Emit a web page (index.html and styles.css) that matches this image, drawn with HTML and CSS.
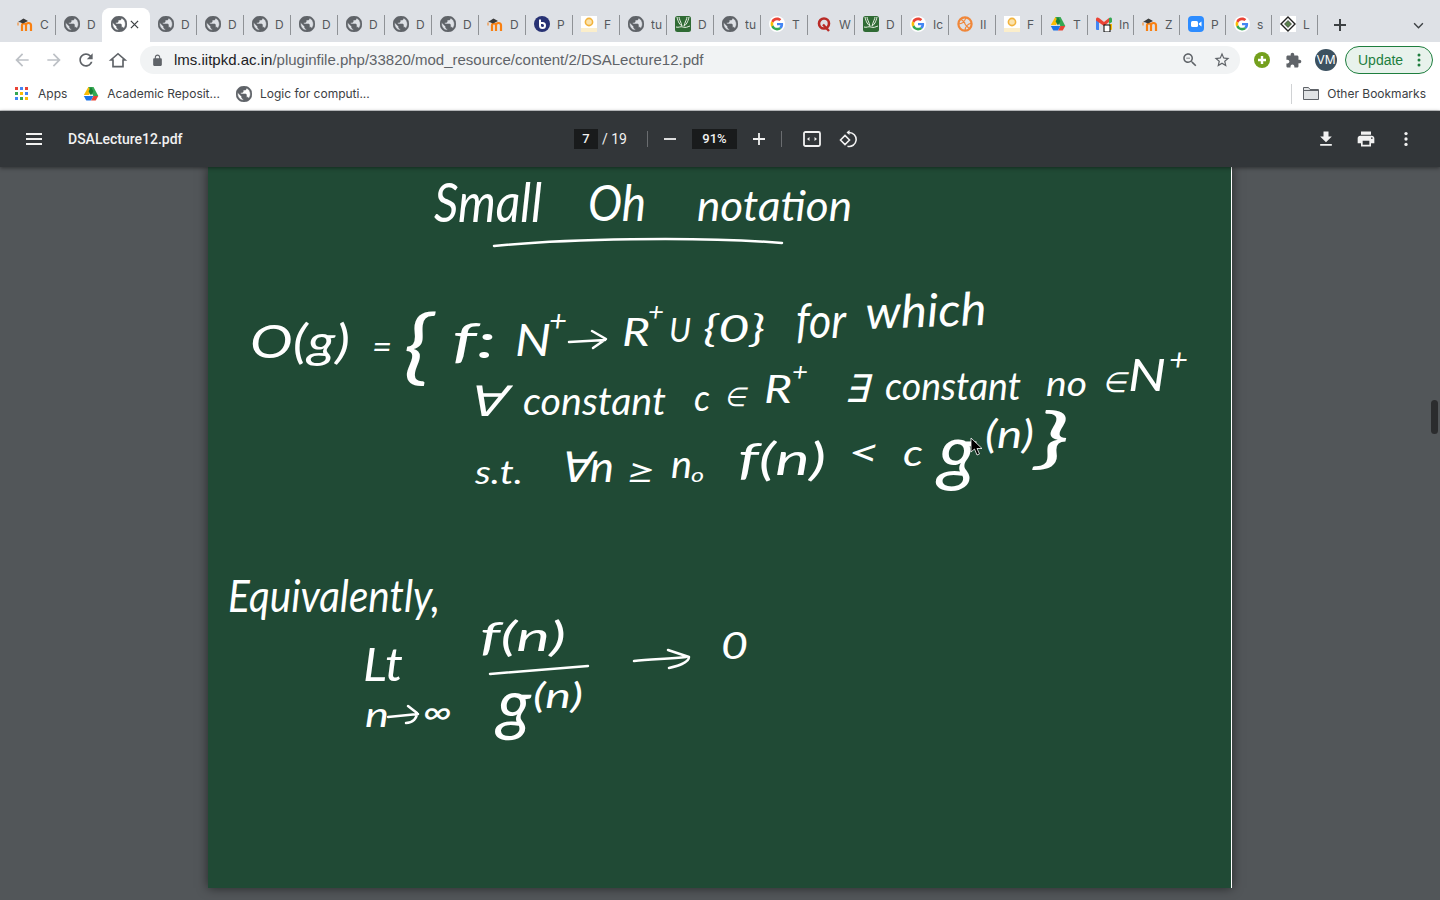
FILE: index.html
```html
<!DOCTYPE html>
<html lang="en">
<head>
    <meta charset="UTF-8">
    <meta name="viewport" content="width=device-width, initial-scale=1.0">
    <title>DSALecture12.pdf</title>
    <link rel="stylesheet" href="styles.css">
</head>
<body>
    <!-- favicons, reused by the tab strip and the bookmarks -->
    <svg class="defs" width="0" height="0">
        <symbol id="globe" viewBox="2 2 20 20"><path fill="#5f6368" stroke="#5f6368" stroke-width=".7" d="M12 2C6.48 2 2 6.48 2 12s4.48 10 10 10 10-4.48 10-10S17.52 2 12 2zm-1 17.93c-3.95-.49-7-3.85-7-7.93 0-.62.08-1.21.21-1.79L9 15v1c0 1.1.9 2 2 2v1.93zm6.9-2.54c-.26-.81-1-1.39-1.9-1.39h-1v-3c0-.55-.45-1-1-1H8v-2h2c.55 0 1-.45 1-1V7h2c1.1 0 2-.9 2-2v-.41c2.93 1.19 5 4.06 5 7.41 0 2.08-.8 3.97-2.1 5.39z"/></symbol>
        <symbol id="moodle" viewBox="0 0 16 16">
            <path fill="none" stroke="#f98012" stroke-width="2.2" d="M5 15V9.5a2 2 0 0 1 4 0V15M9 9.5a2.4 2.4 0 0 1 5 0V15"/>
            <path fill="#3a3a3a" d="M1 6l5.5-3.5L11 5 6 7.5 3 6.2z"/>
            <path fill="none" stroke="#f98012" stroke-width="1" d="M1 6.5v3"/>
        </symbol>
        <symbol id="bbb" viewBox="0 0 16 16">
            <circle cx="8" cy="8" r="8" fill="#283274"/>
            <path fill="none" stroke="#fff" stroke-width="2" d="M6 3.5V9.5a2.5 2.5 0 1 0 2.5-2.5H6"/>
        </symbol>
        <symbol id="yellow" viewBox="0 0 16 16">
            <rect width="16" height="16" fill="#fff"/>
            <circle cx="8" cy="6" r="3.6" fill="#fbe3ad" stroke="#f2b33d" stroke-width="1.6"/>
            <rect x="0" y="12" width="16" height="4" fill="#fbeecb"/>
        </symbol>
        <symbol id="wolfram" viewBox="0 0 16 16">
            <rect width="16" height="16" rx="2.5" fill="#2f6b34"/>
            <path fill="none" stroke="#e8f0e4" stroke-width="1" d="M2 1c1 5 3 8 5 9-1-4-3-7-3-9M14 1c-1 5-3 8-5 9 1-4 3-7 3-9M1 11c3 1 4-1 7 0s4 0 7-1"/>
        </symbol>
        <symbol id="gmark" viewBox="-6 -6 60 60">
            <circle cx="24" cy="24" r="30" fill="#fff"/>
            <path fill="#EA4335" d="M24 9.5c3.54 0 6.71 1.22 9.21 3.6l6.85-6.85C35.9 2.38 30.47 0 24 0 14.62 0 6.51 5.38 2.56 13.22l7.98 6.19C12.43 13.72 17.74 9.5 24 9.5z"/>
            <path fill="#4285F4" d="M46.98 24.55c0-1.57-.15-3.09-.38-4.55H24v9.02h12.94c-.58 2.96-2.26 5.48-4.78 7.18l7.73 6c4.51-4.18 7.09-10.36 7.09-17.65z"/>
            <path fill="#FBBC05" d="M10.53 28.59c-.5-1.45-.78-2.99-.78-4.59s.27-3.14.78-4.59l-7.98-6.19C.92 16.46 0 20.12 0 24c0 3.88.92 7.54 2.56 10.78l7.97-6.19z"/>
            <path fill="#34A853" d="M24 48c6.48 0 11.93-2.13 15.89-5.81l-7.73-6c-2.15 1.45-4.92 2.3-8.16 2.3-6.26 0-11.57-4.22-13.47-9.91l-7.98 6.19C6.51 42.62 14.62 48 24 48z"/>
        </symbol>
        <symbol id="quora" viewBox="0 0 16 16">
            <circle cx="8" cy="7.5" r="5" fill="none" stroke="#b92b27" stroke-width="2.6"/>
            <path stroke="#b92b27" stroke-width="2.4" d="M7 8.5l6 6.5"/>
        </symbol>
        <symbol id="spiral" viewBox="0 0 16 16">
            <circle cx="8" cy="8" r="6.6" fill="none" stroke="#f0873a" stroke-width="2.2"/>
            <path fill="none" stroke="#f0873a" stroke-width="1.2" d="M1 8c4 0 7-2 8-7M8 15c0-4 2-7 7-8M3 3c3 1 5 4 5 5s3 3 5 5"/>
        </symbol>
        <symbol id="drive" viewBox="0 0 16 16">
            <path fill="#fbbc04" d="M5.3 1h5.2L6 9H.8z"/>
            <path fill="#34a853" d="M10.5 1l4.8 9h-5L5.4 1z"/>
            <path fill="#ea4335" d="M15.3 10l-2.6 4.600H8L10.400 10z"/>
            <path fill="#1a73e8" d="M.8 10h9.600l-2.500 4.600H3.300z"/>
            <path fill="#188038" d="M5.600 5.200L8 1l2.400 4.200L8 9.400z"/>
        </symbol>
        <symbol id="gmail" viewBox="0 0 16 16">
            <path fill="#4285f4" d="M0 3h3v11H1a1 1 0 0 1-1-1z"/>
            <path fill="#ea4335" d="M0 3.200C0 1.500 1.700 1 3 2l5 4 5-4v4L8 10 0 4.500z"/>
            <path fill="#34a853" d="M13 2c1.300-1 3-.5 3 1.200V6l-3 2z"/>
            <path fill="#fbbc04" d="M13 8h3v5a1 1 0 0 1-1 1h-2z"/>
            <rect x="8" y="9" width="6" height="7" fill="#fff" stroke="#000" stroke-width="1"/>
        </symbol>
        <symbol id="zoom" viewBox="0 0 16 16">
            <rect width="16" height="16" rx="4" fill="#2d8cff"/>
            <rect x="3" y="5" width="7" height="6" rx="1.500" fill="#fff"/>
            <path fill="#fff" d="M10.800 7.500l2.700-2v5l-2.700-2z"/>
        </symbol>
        <symbol id="diamond" viewBox="0 0 16 16">
            <rect width="16" height="16" fill="#fff"/>
            <path fill="none" stroke="#222" stroke-width="1.400" d="M8 1l7 7-7 7-7-7z"/>
            <path fill="#5a7f4d" stroke="#222" stroke-width=".6" d="M8 4.500L11.500 8 8 11.500 4.500 8z"/>
        </symbol>
    </svg>

    <div class="tabstrip">
        <div class="tab"><svg class="fav"><use href="#moodle"/></svg><span class="tab-label">C</span></div>
        <div class="tab tab-nosep"><svg class="fav"><use href="#globe"/></svg><span class="tab-label">D</span></div>
        <div class="tab tab-active"><svg class="fav"><use href="#globe"/></svg>
            <svg class="tab-close" viewBox="0 0 10 10"><path d="M1 1l8 8M9 1l-8 8"/></svg></div>
        <div class="tab"><svg class="fav"><use href="#globe"/></svg><span class="tab-label">D</span></div>
        <div class="tab"><svg class="fav"><use href="#globe"/></svg><span class="tab-label">D</span></div>
        <div class="tab"><svg class="fav"><use href="#globe"/></svg><span class="tab-label">D</span></div>
        <div class="tab"><svg class="fav"><use href="#globe"/></svg><span class="tab-label">D</span></div>
        <div class="tab"><svg class="fav"><use href="#globe"/></svg><span class="tab-label">D</span></div>
        <div class="tab"><svg class="fav"><use href="#globe"/></svg><span class="tab-label">D</span></div>
        <div class="tab"><svg class="fav"><use href="#globe"/></svg><span class="tab-label">D</span></div>
        <div class="tab"><svg class="fav"><use href="#moodle"/></svg><span class="tab-label">D</span></div>
        <div class="tab"><svg class="fav"><use href="#bbb"/></svg><span class="tab-label">P</span></div>
        <div class="tab"><svg class="fav"><use href="#yellow"/></svg><span class="tab-label">F</span></div>
        <div class="tab"><svg class="fav"><use href="#globe"/></svg><span class="tab-label">tu</span></div>
        <div class="tab"><svg class="fav"><use href="#wolfram"/></svg><span class="tab-label">D</span></div>
        <div class="tab"><svg class="fav"><use href="#globe"/></svg><span class="tab-label">tu</span></div>
        <div class="tab"><svg class="fav"><use href="#gmark"/></svg><span class="tab-label">T</span></div>
        <div class="tab"><svg class="fav"><use href="#quora"/></svg><span class="tab-label">W</span></div>
        <div class="tab"><svg class="fav"><use href="#wolfram"/></svg><span class="tab-label">D</span></div>
        <div class="tab"><svg class="fav"><use href="#gmark"/></svg><span class="tab-label">Ic</span></div>
        <div class="tab"><svg class="fav"><use href="#spiral"/></svg><span class="tab-label">II</span></div>
        <div class="tab tab-narrow"><svg class="fav"><use href="#yellow"/></svg><span class="tab-label">F</span></div>
        <div class="tab tab-narrow"><svg class="fav"><use href="#drive"/></svg><span class="tab-label">T</span></div>
        <div class="tab tab-narrow"><svg class="fav"><use href="#gmail"/></svg><span class="tab-label">In</span></div>
        <div class="tab tab-narrow"><svg class="fav"><use href="#moodle"/></svg><span class="tab-label">Z</span></div>
        <div class="tab tab-narrow"><svg class="fav"><use href="#zoom"/></svg><span class="tab-label">P</span></div>
        <div class="tab tab-narrow"><svg class="fav"><use href="#gmark"/></svg><span class="tab-label">s</span></div>
        <div class="tab tab-narrow"><svg class="fav"><use href="#diamond"/></svg><span class="tab-label">L</span></div>
        <svg class="new-tab" viewBox="0 0 12 12"><path d="M6 0v12M0 6h12"/></svg>
        <svg class="tab-search" viewBox="0 0 12 8"><path d="M1 1.500l5 5 5-5"/></svg>
    </div>

    <div class="toolbar">
        <svg class="tool tool-off" viewBox="0 0 24 24"><path d="M20 11H7.830l5.590-5.590L12 4l-8 8 8 8 1.410-1.410L7.830 13H20v-2z"/></svg>
        <svg class="tool tool-off" viewBox="0 0 24 24"><path d="M12 4l-1.410 1.410L16.170 11H4v2h12.170l-5.580 5.590L12 20l8-8z"/></svg>
        <svg class="tool" viewBox="0 0 24 24"><path d="M17.650 6.350C16.200 4.900 14.210 4 12 4c-4.420 0-7.990 3.580-7.990 8s3.570 8 7.990 8c3.730 0 6.840-2.550 7.730-6h-2.080c-.82 2.330-3.040 4-5.650 4-3.310 0-6-2.690-6-6s2.690-6 6-6c1.660 0 3.140.69 4.220 1.780L13 11h7V4l-2.350 2.350z"/></svg>
        <svg class="tool tool-home" viewBox="0 0 24 24"><path d="M12 4.500L3.500 12H6v8h12v-8h2.500z"/></svg>
        <div class="omnibox">
            <svg class="lock" viewBox="0 0 24 24"><path d="M18 8h-1V6c0-2.760-2.240-5-5-5S7 3.240 7 6v2H6c-1.100 0-2 .9-2 2v10c0 1.100.9 2 2 2h12c1.100 0 2-.9 2-2V10c0-1.100-.9-2-2-2zM9 6c0-1.660 1.340-3 3-3s3 1.340 3 3v2H9V6z"/></svg>
            <div class="url"><span class="url-host">lms.iitpkd.ac.in</span>/pluginfile.php/33820/mod_resource/content/2/DSALecture12.pdf</div>
            <svg class="omni-icon" viewBox="0 0 24 24"><path d="M15.500 14h-.79l-.28-.27C15.410 12.590 16 11.110 16 9.500 16 5.910 13.090 3 9.500 3S3 5.910 3 9.500 5.910 16 9.500 16c1.610 0 3.090-.59 4.230-1.570l.27.28v.79l5 4.990L20.490 19l-4.990-5zm-6 0C7.010 14 5 11.990 5 9.500S7.010 5 9.500 5 14 7.010 14 9.500 11.990 14 9.500 14zM7 9h5v1H7z"/></svg>
            <svg class="omni-icon" viewBox="0 0 24 24"><path d="M22 9.240l-7.190-.62L12 2 9.190 8.630 2 9.240l5.460 4.730L5.820 21 12 17.270 18.180 21l-1.630-7.030L22 9.240zM12 15.400l-3.760 2.270 1-4.280-3.320-2.880 4.380-.38L12 6.100l1.710 4.040 4.380.38-3.320 2.880 1 4.280L12 15.400z"/></svg>
        </div>
        <svg class="ext-plus" viewBox="0 0 16 16"><circle cx="8" cy="8" r="8" fill="#74a01e"/><path d="M8 4v8M4 8h8" stroke="#fff" stroke-width="2.400"/></svg>
        <svg class="ext-puzzle" viewBox="0 0 24 24"><path d="M20.500 11H19V7c0-1.100-.9-2-2-2h-4V3.500C13 2.120 11.880 1 10.500 1S8 2.120 8 3.500V5H4c-1.100 0-1.990.9-1.990 2v3.800H3.500c1.490 0 2.700 1.210 2.700 2.700s-1.210 2.700-2.700 2.700H2V20c0 1.100.9 2 2 2h3.800v-1.500c0-1.490 1.210-2.700 2.700-2.700 1.490 0 2.700 1.210 2.700 2.700V22H17c1.100 0 2-.9 2-2v-4h1.500c1.380 0 2.500-1.120 2.500-2.500S21.880 11 20.500 11z"/></svg>
        <div class="avatar">VM</div>
        <div class="update">
            <span>Update</span>
            <svg class="update-dots" viewBox="0 0 4 14"><circle cx="2" cy="2" r="1.500"/><circle cx="2" cy="7" r="1.500"/><circle cx="2" cy="12" r="1.500"/></svg>
        </div>
    </div>

    <div class="bookmarks">
        <div class="bookmark">
            <svg class="apps" viewBox="0 0 13 13">
                <rect x="0" y="0" width="3" height="3" fill="#ea4335"/><rect x="5" y="0" width="3" height="3" fill="#4285f4"/><rect x="10" y="0" width="3" height="3" fill="#ea4335"/>
                <rect x="0" y="5" width="3" height="3" fill="#34a853"/><rect x="5" y="5" width="3" height="3" fill="#fbbc04"/><rect x="10" y="5" width="3" height="3" fill="#4285f4"/>
                <rect x="0" y="10" width="3" height="3" fill="#4285f4"/><rect x="5" y="10" width="3" height="3" fill="#34a853"/><rect x="10" y="10" width="3" height="3" fill="#fbbc04"/>
            </svg>
            <span>Apps</span>
        </div>
        <div class="bookmark">
            <svg class="fav"><use href="#drive"/></svg>
            <span>Academic Reposit...</span>
        </div>
        <div class="bookmark">
            <svg class="fav"><use href="#globe"/></svg>
            <span>Logic for computi...</span>
        </div>
        <div class="other-bookmarks">
            <svg class="folder" viewBox="0 0 16 13"><path d="M.5 12.500V.5h5l1.500 2h8.500v10z"/><path d="M.5 3.500h15"/></svg>
            <span>Other Bookmarks</span>
        </div>
    </div>

    <div class="pdf-toolbar">
        <div class="pdf-left">
            <svg class="hamburger" viewBox="0 0 16 12"><path d="M0 1h16M0 6h16M0 11h16"/></svg>
            <span class="pdf-title">DSALecture12.pdf</span>
        </div>
        <div class="pdf-center">
            <span class="pdf-box pdf-box-page">7</span>
            <span class="pdf-count">/ 19</span>
            <span class="pdf-sep"></span>
            <svg class="pdf-zoom-btn" viewBox="0 0 12 12"><path d="M0 6h12"/></svg>
            <span class="pdf-box pdf-box-zoom">91%</span>
            <svg class="pdf-zoom-btn" viewBox="0 0 12 12"><path d="M0 6h12M6 0v12"/></svg>
            <span class="pdf-sep pdf-sep-second"></span>
            <svg class="pdf-fit" viewBox="0 0 18 16"><rect x="1" y="1" width="16" height="14" rx="1.500" fill="none" stroke="#f1f1f1" stroke-width="1.800"/><path fill="#f1f1f1" d="M4 8l2.500-2v4zM14 8l-2.500-2v4z"/></svg>
            <svg class="pdf-rotate" viewBox="0 0 18 18"><path fill="none" stroke="#f1f1f1" stroke-width="1.600" d="M1.500 10l4.500-4.500L10.500 10 6 14.500zM8.500 2.500h1.500a7 7 0 1 1-1.500 13.800"/><path fill="#f1f1f1" d="M7.500 2.500L10.500 0v5z"/></svg>
        </div>
        <div class="pdf-right">
            <svg class="pdf-action" viewBox="0 0 24 24"><path d="M19 9h-4V3H9v6H5l7 7 7-7zM5 18v2h14v-2H5z"/></svg>
            <svg class="pdf-action" viewBox="0 0 24 24"><path d="M19 8H5c-1.660 0-3 1.340-3 3v6h4v4h12v-4h4v-6c0-1.660-1.340-3-3-3zm-3 11H8v-5h8v5zm3-7c-.55 0-1-.45-1-1s.45-1 1-1 1 .45 1 1-.45 1-1 1zm-1-9H6v4h12V3z"/></svg>
            <svg class="pdf-action" viewBox="0 0 24 24"><circle cx="12" cy="5.500" r="2"/><circle cx="12" cy="12" r="2"/><circle cx="12" cy="18.500" r="2"/></svg>
        </div>
    </div>

    <div class="viewer">
        <div class="page">
            <!-- viewBox uses window coordinates so the notes are easy to place -->
            <svg class="notes" viewBox="208 167 1023 721">
                <text x="434" y="222" font-size="54" textLength="108" lengthAdjust="spacingAndGlyphs">Small</text>
                <text x="588" y="221" font-size="50" textLength="58" lengthAdjust="spacingAndGlyphs">Oh</text>
                <text x="697" y="221" font-size="42" textLength="155" lengthAdjust="spacingAndGlyphs">notation</text>
                <path class="stroke" d="M494 246c70-7 200-10 288-3"/>

                <text x="250" y="358" font-size="46" textLength="100" lengthAdjust="spacingAndGlyphs">O(g)</text>
                <text x="372" y="359" font-size="34" textLength="20" lengthAdjust="spacingAndGlyphs">=</text>
                <text x="403" y="374" font-size="82" textLength="30" lengthAdjust="spacingAndGlyphs">{</text>
                <text x="452" y="358" font-size="48" textLength="44" lengthAdjust="spacingAndGlyphs">f:</text>
                <text x="515" y="356" font-size="44" textLength="36" lengthAdjust="spacingAndGlyphs">N</text>
                <text x="549" y="331" font-size="28" textLength="18" lengthAdjust="spacingAndGlyphs">+</text>
                <path class="stroke" d="M569 342l36-2M592 331l14 8-13 9"/>
                <text x="622" y="346" font-size="38" textLength="28" lengthAdjust="spacingAndGlyphs">R</text>
                <text x="648" y="321" font-size="26" textLength="16" lengthAdjust="spacingAndGlyphs">+</text>
                <text x="669" y="342" font-size="32" textLength="22" lengthAdjust="spacingAndGlyphs">U</text>
                <text x="703" y="342" font-size="36" textLength="62" lengthAdjust="spacingAndGlyphs">{0}</text>
                <text x="796" y="338" font-size="48" textLength="50" lengthAdjust="spacingAndGlyphs">for</text>
                <text x="866" y="329" font-size="46" textLength="121" lengthAdjust="spacingAndGlyphs" transform="rotate(-2 866 329)">which</text>

                <text x="466" y="416" font-size="42" textLength="38" lengthAdjust="spacingAndGlyphs">∀</text>
                <text x="523" y="415" font-size="38" textLength="143" lengthAdjust="spacingAndGlyphs">constant</text>
                <text x="694" y="411" font-size="36" textLength="16" lengthAdjust="spacingAndGlyphs">c</text>
                <text x="724" y="406" font-size="26" textLength="22" lengthAdjust="spacingAndGlyphs">∈</text>
                <text x="764" y="403" font-size="38" textLength="28" lengthAdjust="spacingAndGlyphs">R</text>
                <text x="792" y="381" font-size="26" textLength="16" lengthAdjust="spacingAndGlyphs">+</text>
                <text x="844" y="402" font-size="38" textLength="24" lengthAdjust="spacingAndGlyphs">∃</text>
                <text x="885" y="400" font-size="38" textLength="136" lengthAdjust="spacingAndGlyphs">constant</text>
                <text x="1046" y="396" font-size="34" textLength="41" lengthAdjust="spacingAndGlyphs">no</text>
                <text x="1102" y="392" font-size="28" textLength="24" lengthAdjust="spacingAndGlyphs">∈</text>
                <text x="1128" y="391" font-size="44" textLength="38" lengthAdjust="spacingAndGlyphs">N</text>
                <text x="1169" y="370" font-size="30" textLength="19" lengthAdjust="spacingAndGlyphs">+</text>

                <text x="475" y="484" font-size="32" textLength="48" lengthAdjust="spacingAndGlyphs">s.t.</text>
                <text x="558" y="482" font-size="42" textLength="56" lengthAdjust="spacingAndGlyphs">∀n</text>
                <text x="626" y="483" font-size="34" textLength="30" lengthAdjust="spacingAndGlyphs">≥</text>
                <text x="671" y="478" font-size="38" textLength="21" lengthAdjust="spacingAndGlyphs">n</text>
                <text x="691" y="482" font-size="20" textLength="13" lengthAdjust="spacingAndGlyphs">o</text>
                <text x="738" y="475" font-size="44" textLength="88" lengthAdjust="spacingAndGlyphs">f(n)</text>
                <text x="848" y="466" font-size="38" textLength="32" lengthAdjust="spacingAndGlyphs">&lt;</text>
                <text x="903" y="466" font-size="36" textLength="20" lengthAdjust="spacingAndGlyphs">c</text>
                <text x="938" y="477" font-size="74" textLength="38" lengthAdjust="spacingAndGlyphs">g</text>
                <text x="985" y="448" font-size="38" textLength="49" lengthAdjust="spacingAndGlyphs">(n)</text>
                <text x="1035" y="461" font-size="66" textLength="35" lengthAdjust="spacingAndGlyphs">}</text>

                <text x="228" y="612" font-size="44" textLength="212" lengthAdjust="spacingAndGlyphs">Equivalently,</text>
                <text x="363" y="681" font-size="46" textLength="40" lengthAdjust="spacingAndGlyphs">Lt</text>
                <text x="480" y="651" font-size="40" textLength="86" lengthAdjust="spacingAndGlyphs">f(n)</text>
                <path class="stroke" d="M490 674l98-8"/>
                <path class="stroke" d="M634 661c16-2 36-2 52-4M668 650l21 7c0 6-12 9-20 11"/>
                <text x="721" y="659" font-size="36" textLength="27" lengthAdjust="spacingAndGlyphs">0</text>
                <text x="365" y="727" font-size="34" textLength="24" lengthAdjust="spacingAndGlyphs">n</text>
                <path class="stroke" d="M388 717l30-3M408 706l9 7c0 5-4 10-11 10"/>
                <text x="423" y="724" font-size="34" textLength="29" lengthAdjust="spacingAndGlyphs">∞</text>
                <text x="497" y="728" font-size="68" textLength="34" lengthAdjust="spacingAndGlyphs">g</text>
                <text x="533" y="708" font-size="34" textLength="50" lengthAdjust="spacingAndGlyphs">(n)</text>

                <path class="cursor" d="M971 438v14l3.500-3 2.500 6 2.500-1-2.500-5.500h5z"/>
            </svg>
        </div>
        <div class="scroll-thumb"></div>
    </div>
</body>
</html>
```

FILE: styles.css
```css
* {
    box-sizing: border-box;
}
html, body {
    margin: 0;
    padding: 0;
    height: 100%;
    overflow: hidden;
}
body {
    width: 1440px;
    height: 900px;
    display: flex;
    flex-direction: column;
    font-family: Inter, "Liberation Sans", sans-serif;
    background-color: #525659;
}
.defs {
    position: absolute;
}

/* tab strip */
.tabstrip {
    height: 42px;
    flex: none;
    display: flex;
    padding: 8px 0 0 9px;
    background-color: #dee1e6;
}
.tab {
    position: relative;
    width: 47px;
    height: 34px;
    flex: none;
    display: flex;
    align-items: center;
    padding: 0 0 2px 8px;
}
.tab::after {
    content: "";
    position: absolute;
    right: 0;
    top: 7px;
    height: 20px;
    width: 1px;
    background-color: #8f9296;
}
.tab-narrow {
    width: 46px;
}
.tab-nosep::after {
    display: none;
}
.tab-active {
    background-color: #ffffff;
    border-radius: 8px 8px 0 0;
    box-shadow: -1px 0 0 #ffffff;
}
.tab-active::after {
    display: none;
}
.fav {
    width: 16px;
    height: 16px;
    flex: none;
}
.tab-label {
    width: 13px;
    margin-left: 7px;
    overflow: hidden;
    white-space: nowrap;
    font-size: 12px;
    color: #55585c;
}
.tab-close {
    width: 9px;
    height: 9px;
    margin-left: 3px;
}
.tab-close path {
    fill: none;
    stroke: #3c4043;
    stroke-width: 1.4;
}
.new-tab {
    width: 12px;
    height: 12px;
    margin: 11px 0 0 16px;
}
.new-tab path {
    fill: none;
    stroke: #3c4043;
    stroke-width: 2;
}
.tab-search {
    width: 11px;
    height: 7px;
    margin: 14px 0 0 67px;
}
.tab-search path {
    fill: none;
    stroke: #3c4043;
    stroke-width: 1.6;
}

/* address bar */
.toolbar {
    height: 36px;
    flex: none;
    display: flex;
    align-items: center;
    padding-left: 12px;
    background-color: #ffffff;
}
.tool {
    width: 20px;
    height: 20px;
    flex: none;
    margin-right: 12px;
    fill: #5f6368;
}
.tool-off {
    fill: #bdc1c6;
}
.tool-home {
    fill: none;
    stroke: #5f6368;
    stroke-width: 2;
}
.omnibox {
    width: 1100px;
    height: 28px;
    display: flex;
    align-items: center;
    padding-left: 11px;
    border-radius: 14px;
    background-color: #f1f3f4;
}
.lock {
    width: 13px;
    height: 13px;
    flex: none;
    fill: #5f6368;
}
.url {
    flex: 1;
    margin: 0 0 2px 10px;
    font-family: "Liberation Sans", sans-serif;
    font-size: 15px;
    color: #5f6368;
}
.url-host {
    color: #202124;
}
.omni-icon {
    width: 18px;
    height: 18px;
    margin-right: 9px;
    fill: #5f6368;
}
.omni-icon + .omni-icon {
    margin: 0 9px 0 5px;
}
.ext-plus {
    width: 16px;
    height: 16px;
    margin-left: 14px;
}
.ext-puzzle {
    width: 17px;
    height: 17px;
    margin-left: 15px;
    fill: #5f6368;
}
.avatar {
    width: 22px;
    height: 22px;
    margin-left: 13px;
    border-radius: 50%;
    background-color: #3c5160;
    color: #ffffff;
    font-size: 12px;
    line-height: 22px;
    text-align: center;
}
.update {
    width: 88px;
    height: 28px;
    margin-left: 8px;
    display: flex;
    align-items: center;
    justify-content: space-between;
    padding: 0 11px 0 12px;
    border: 1px solid #1e7e3e;
    border-radius: 14px;
    background-color: #e8f2ec;
    color: #1e7e3e;
    font-family: "Liberation Sans", sans-serif;
    font-size: 14px;
}
.update-dots {
    width: 4px;
    height: 14px;
    fill: #1e7e3e;
}

/* bookmarks bar */
.bookmarks {
    height: 33px;
    flex: none;
    display: flex;
    align-items: center;
    padding: 0 0 1px 15px;
    background-color: #ffffff;
    border-bottom: 1px solid #c8cacc;
    font-size: 12px;
    color: #3c4043;
}
.bookmark {
    display: flex;
    align-items: center;
    gap: 8px;
    margin-right: 16px;
}
.apps {
    width: 13px;
    height: 13px;
    margin-right: 2px;
}
.other-bookmarks {
    display: flex;
    align-items: center;
    gap: 8px;
    margin-left: auto;
    height: 20px;
    padding: 0 14px 0 11px;
    border-left: 1px solid #d0d2d4;
}
.folder {
    width: 16px;
    height: 13px;
}
.folder path {
    fill: #e1e3e5;
    stroke: #5f6368;
    stroke-width: 1;
}

/* pdf viewer toolbar */
.pdf-toolbar {
    position: relative;
    z-index: 2;
    height: 56px;
    flex: none;
    display: flex;
    align-items: center;
    background-color: #323639;
    box-shadow: 0 1px 4px rgba(0, 0, 0, 0.45);
    color: #f1f1f1;
    font-family: Roboto, sans-serif;
    font-size: 14px;
}
.pdf-left {
    display: flex;
    align-items: center;
    width: 574px;
    flex: none;
    padding-left: 26px;
}
.hamburger {
    width: 16px;
    height: 12px;
    margin-right: 26px;
}
.hamburger path {
    fill: none;
    stroke: #f1f1f1;
    stroke-width: 2;
}
.pdf-title {
    font-weight: 500;
    color: #f1f1f1;
}
.pdf-center {
    display: flex;
    align-items: center;
}
.pdf-box {
    height: 20px;
    line-height: 20px;
    text-align: center;
    background-color: #191b1c;
    font-size: 13px;
    font-weight: 500;
}
.pdf-box-page {
    width: 24px;
}
.pdf-box-zoom {
    width: 45px;
    margin: 0 16px;
}
.pdf-count {
    margin-left: 4px;
    font-size: 14px;
}
.pdf-sep {
    width: 1px;
    height: 16px;
    margin: 0 16px 0 20px;
    background-color: #6a6d70;
}
.pdf-sep-second {
    margin: 0 21px 0 16px;
}
.pdf-zoom-btn {
    width: 12px;
    height: 12px;
}
.pdf-zoom-btn path {
    fill: none;
    stroke: #f1f1f1;
    stroke-width: 1.800;
}
.pdf-fit {
    width: 18px;
    height: 16px;
    margin-right: 18px;
}
.pdf-rotate {
    width: 18px;
    height: 18px;
}
.pdf-right {
    display: flex;
    align-items: center;
    gap: 20px;
    margin-left: auto;
    padding-right: 24px;
}
.pdf-action {
    width: 20px;
    height: 20px;
    fill: #f1f1f1;
}

/* document area */
.viewer {
    position: relative;
    flex: 1;
    min-height: 0;
    overflow: hidden;
    background-color: #525659;
}
.page {
    width: 1024px;
    height: 721px;
    margin: 0 auto;
    background-color: #204a35;
    border-right: 1px solid #ffffff;
    box-shadow: 0 0 10px rgba(0, 0, 0, 0.55);
}
.notes {
    display: block;
    width: 1023px;
    height: 721px;
}
.notes text {
    font-family: Lato, sans-serif;
    font-style: italic;
    font-weight: 400;
    fill: #ffffff;
}
.notes .stroke {
    fill: none;
    stroke: #ffffff;
    stroke-width: 2.500;
    stroke-linecap: round;
    stroke-linejoin: round;
}
.notes .cursor {
    fill: #000000;
    stroke: #ffffff;
    stroke-width: 0.800;
}
.scroll-thumb {
    position: absolute;
    top: 233px;
    right: 2px;
    width: 7px;
    height: 34px;
    border-radius: 4px;
    background-color: #2b2c2e;
}
```
